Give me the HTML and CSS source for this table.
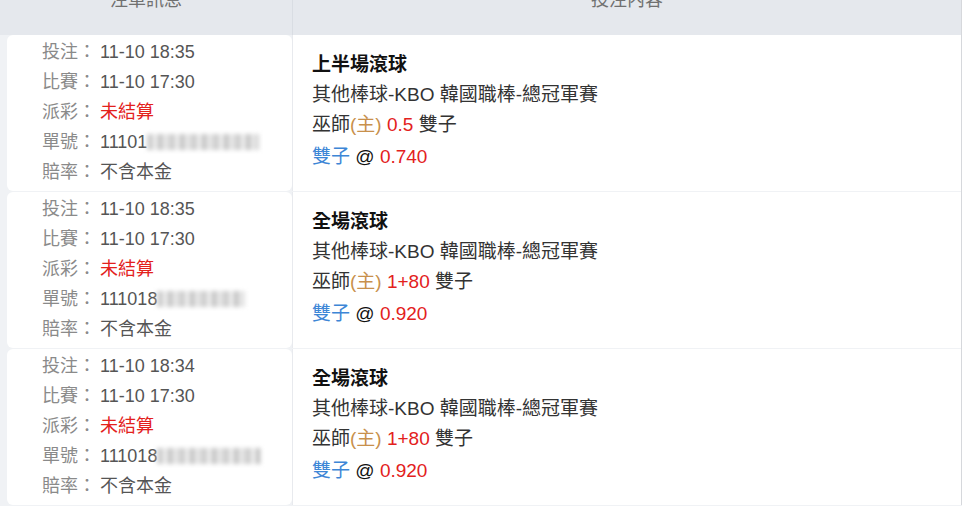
FILE: index.html
```html
<!DOCTYPE html>
<html>
  <head>
    <meta charset="utf-8">
    <meta name="viewport" content="width=device-width, initial-scale=1">
    <title>注單列表</title>
    <link rel="stylesheet" href="styles.css">
  </head>
  <body>
    <div id="bets">
      <div class="head">
        <div class="head_cell">注單訊息</div>
        <div class="head_cell head_bet">投注內容</div>
      </div>
      <div class="rows">
        <div class="row">
          <div class="info">
            <p><span class="label">投注：</span><span class="value">11-10 18:35</span></p>
            <p><span class="label">比賽：</span><span class="value">11-10 17:30</span></p>
            <p><span class="label">派彩：</span><span class="red">未結算</span></p>
            <p><span class="label">單號：</span><span class="value">11101</span><span class="mask mask_a"></span></p>
            <p><span class="label">賠率：</span><span class="value">不含本金</span></p>
          </div>
          <div class="bet">
            <p class="title">上半場滾球</p>
            <p>其他棒球-KBO 韓國職棒-總冠軍賽</p>
            <p>巫師<span class="home">(主)</span> <span class="red">0.5</span> 雙子</p>
            <p class="pick"><span class="blue">雙子</span> @ <span class="red">0.740</span></p>
          </div>
        </div>
        <div class="row">
          <div class="info">
            <p><span class="label">投注：</span><span class="value">11-10 18:35</span></p>
            <p><span class="label">比賽：</span><span class="value">11-10 17:30</span></p>
            <p><span class="label">派彩：</span><span class="red">未結算</span></p>
            <p><span class="label">單號：</span><span class="value">111018</span><span class="mask mask_b"></span></p>
            <p><span class="label">賠率：</span><span class="value">不含本金</span></p>
          </div>
          <div class="bet">
            <p class="title">全場滾球</p>
            <p>其他棒球-KBO 韓國職棒-總冠軍賽</p>
            <p>巫師<span class="home">(主)</span> <span class="red">1+80</span> 雙子</p>
            <p class="pick"><span class="blue">雙子</span> @ <span class="red">0.920</span></p>
          </div>
        </div>
        <div class="row">
          <div class="info">
            <p><span class="label">投注：</span><span class="value">11-10 18:34</span></p>
            <p><span class="label">比賽：</span><span class="value">11-10 17:30</span></p>
            <p><span class="label">派彩：</span><span class="red">未結算</span></p>
            <p><span class="label">單號：</span><span class="value">111018</span><span class="mask mask_c"></span></p>
            <p><span class="label">賠率：</span><span class="value">不含本金</span></p>
          </div>
          <div class="bet">
            <p class="title">全場滾球</p>
            <p>其他棒球-KBO 韓國職棒-總冠軍賽</p>
            <p>巫師<span class="home">(主)</span> <span class="red">1+80</span> 雙子</p>
            <p class="pick"><span class="blue">雙子</span> @ <span class="red">0.920</span></p>
          </div>
        </div>
      </div>
    </div>
  </body>
</html>
```

FILE: styles.css
```css
body {
  margin: 0;
  overflow: hidden;
  background: #f0f2f5;
  font-family: 'Liberation Sans', 'Noto Sans CJK TC', sans-serif;
  font-size: 18px;
  color: #333;
}

p {
  margin: 0;
}

#bets {
  width: 961px;
  border-right: 1px solid #d6d8dc;
}

.head {
  display: grid;
  grid-template-columns: 292px 1fr;
  height: 35px;
  overflow: hidden;
  background: #e5e8ed;
}

.head_cell {
  margin-top: -10px;
  line-height: 20px;
  text-align: center;
  color: #707070;
}

.head_bet {
  border-left: 1px solid #d9dde3;
}

.rows {
  display: flex;
  flex-direction: column;
  gap: 1px;
  padding-left: 7px;
}

.row {
  display: grid;
  grid-template-columns: 285px 1fr;
  height: 156px;
}

.info {
  background: #fff;
  border-radius: 6px;
  padding: 2px 0 0 35px;
  line-height: 30px;
}

.label {
  display: inline-block;
  width: 58px;
  color: #8a8a8a;
}

.value {
  color: #555;
}

.mask {
  display: inline-block;
  height: 16px;
  vertical-align: -2px;
  background: repeating-linear-gradient(90deg, #cfcfcf 0 6px, #ececec 6px 11px, #c2c2c2 11px 15px, #e4e4e4 15px 22px);
  filter: blur(2px);
}

.mask_a {
  width: 112px;
}

.mask_b {
  width: 88px;
}

.mask_c {
  width: 104px;
}

.bet {
  background: #fff;
  border-left: 1px solid #e8eaee;
  padding: 15px 0 0 19px;
  font-size: 19px;
  line-height: 30px;
  color: #333;
}

.title {
  font-weight: bold;
  color: #111;
}

.pick {
  margin-top: 2px;
  color: #111;
}

.red {
  color: #e3211c;
}

.home {
  color: #c8904c;
}

.blue {
  color: #3d86d6;
}
```
